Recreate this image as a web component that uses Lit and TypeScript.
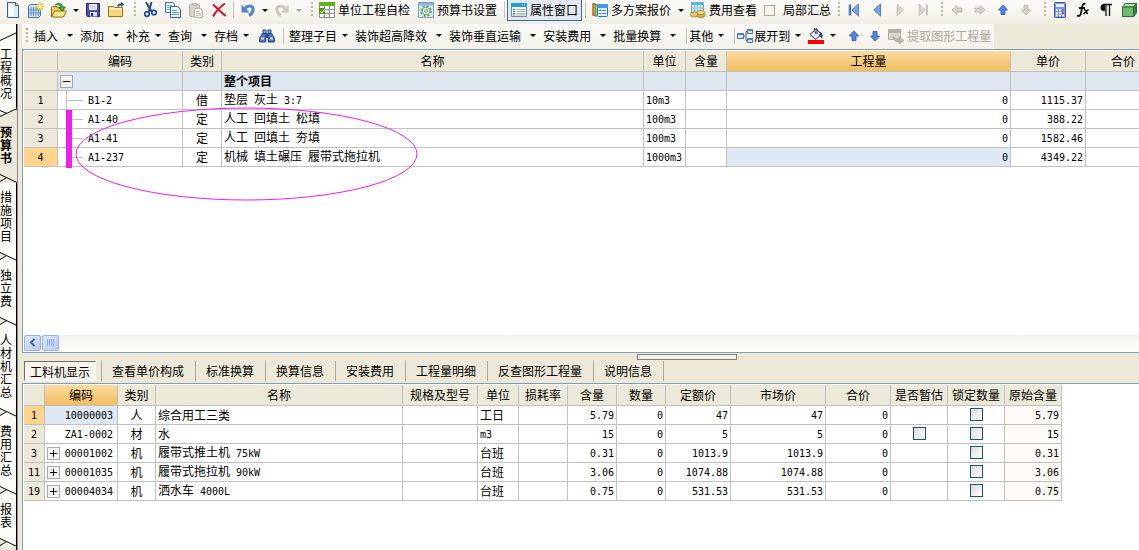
import { LitElement, html, css, svg, nothing, TemplateResult } from "lit";
import { customElement } from "lit/decorators.js";
import { classMap } from "lit/directives/class-map.js";

type Align = "left" | "center" | "right";
interface Column {
  title: string;
  width: number;
  align?: Align;
  current?: boolean;
}

const ICONS: Record<string, TemplateResult> = {
  doc: svg`<path d="M2.500 .5h8l3 3v12h-11z" fill="#dcebfa" stroke="#35618f"/><path d="M10.500 .5v3h3" fill="#fff" stroke="#35618f"/><path d="M4 2h5v12H4z" fill="#fff"/>`,
  sheet: svg`<path d="M.5 4.500l2-2h10v11l-2 2h-10z" fill="#d5e6fa" stroke="#3f74bd"/><path d="M3 5v9M5.500 5v9M8 5v9M10.500 5v9M1 8h11M1 11h11" stroke="#5b93d8"/><path d="M12 0v9M7.500 4.500h9M9 1.500l6 6M15 1.500l-6 6" stroke="#f2c32c" stroke-width="1.400"/><circle cx="12" cy="4.500" r="2" fill="#fff6b8"/>`,
  open: svg`<path d="M.5 14.500v-9l1-1h4l1 1.500h6v8.500z" fill="#f2cf60" stroke="#8f6b13"/><path d="M.5 15l3-6h12l-3 6z" fill="#fce58e" stroke="#8f6b13"/><path d="M4 3c3-3 7-2 8 2h2.500L11 9 7.500 5H10C9 3 7 2 4 3z" fill="#35b535" stroke="#137013" stroke-width=".7"/>`,
  save: svg`<path d="M1.500 1.500h13v13h-12l-1-1z" fill="#4a4cb4" stroke="#22247c"/><path d="M4 2h8v6H4z" fill="#f4f5ff"/><path d="M5 4h6M5 6h6" stroke="#b2b5dc"/><path d="M5 10h7v4.500H5z" fill="#d8daf0"/><path d="M6 11h2v3H6z" fill="#25276e"/>`,
  folder: svg`<path d="M.5 14.500v-10h5l1.500 1h7.500v9z" fill="#f6d77d" stroke="#9a7420"/><path d="M1.500 7h12" stroke="#fff1bd" stroke-width="2"/><path d="M9 4c1-2 2-2.500 4-2.500V0l3 2.500L13 5V3.500c-1.500 0-2 .3-2.500 1.500z" fill="#2c467e"/>`,
  cut: svg`<path d="M4 0l5 9M9.500 0L7 9" stroke="#27496f" stroke-width="2"/><circle cx="5" cy="12" r="2.300" fill="none" stroke="#1c3fb0" stroke-width="1.600"/><circle cx="12" cy="10.500" r="2.300" fill="none" stroke="#1c3fb0" stroke-width="1.600"/><path d="M6 10l3-2 2 1" stroke="#1c3fb0" stroke-width="1.500" fill="none"/>`,
  copy: svg`<path d="M.5 .5h7l2 2v8h-9z" fill="#eaf4ff" stroke="#3974b4"/><path d="M2 3.500h5M2 5.500h5M2 7.500h3" stroke="#78a9de"/><path d="M5.500 4.500h7l3 3v8h-10z" fill="#f4f9ff" stroke="#2c64a6"/><path d="M7 8.500h5M7 10.500h7M7 12.500h7" stroke="#5e97d6"/>`,
  paste: svg`<rect x="1.500" y="2.500" width="10" height="12" rx="1" fill="#d6d3c8" stroke="#b3b0a5"/><path d="M4 1h5v3H4z" fill="#c3c0b5"/><path d="M6.500 6.500h6l2 2v7h-8z" fill="#f4f3ee" stroke="#b9b6ab"/><path d="M8 9.500h4M8 11.500h5M8 13.500h5" stroke="#cbc8bd"/>`,
  del: svg`<path d="M2 2.500C6 6 10 10 14.500 14M14 1.500C9 5 5 9 2 14.500" stroke="#d3122e" stroke-width="2" fill="none"/>`,
  undo: svg`<path d="M5 6.500c3-4 9-3 8 2-.5 3-2 4-4 5" fill="none" stroke="#4c84d3" stroke-width="3"/><path d="M1.500 2.500v8h8z" fill="#4c84d3"/>`,
  redo: svg`<path d="M11 6.500C8 2.500 2 3.500 3 8.500c.5 3 2 4 4 5" fill="none" stroke="#cbc8be" stroke-width="3"/><path d="M14.500 2.500v8h-8z" fill="#cbc8be"/>`,
  check: svg`<path d="M.5 .5h15v15H.5z" fill="#fff" stroke="#8c8f8c"/><path d="M0 0h16v4H0z" fill="#62b41f"/><path d="M1 7.500h14M1 11.500h14M5.500 4v11M10.500 4v11" stroke="#8c8f8c"/><path d="M0 6h6v6H0z" fill="#4f9c1c"/><path d="M1 9l2 2 3-4" stroke="#fff" fill="none"/>`,
  gear: svg`<path d="M.5 .5h15v15H.5z" fill="#d9ebfa" stroke="#7d9fc9"/><path d="M1 1h14v2.500H1z" fill="#8eb4e4"/><circle cx="8" cy="9" r="5" fill="#eef9ec" stroke="#58a35c" stroke-width="1.600" stroke-dasharray="2.200 1.700"/><circle cx="8" cy="9" r="3.800" fill="#eef9ec" stroke="#58a35c"/><circle cx="8" cy="9" r="1.400" fill="#fff" stroke="#58a35c"/>`,
  props: svg`<path d="M.5 1.500h15v13H.5z" fill="#f4faf6" stroke="#6d8f9c"/><path d="M0 1h16v4H0z" fill="#1e9ec0"/><path d="M11 3h1M13 3h1" stroke="#fff"/><path d="M2 7.500h2M2 9.500h2M2 11.500h2M2 13h2" stroke="#2f8a60"/><path d="M5.500 7.500h9M5.500 9.500h9M5.500 11.500h9M5.500 13h9" stroke="#a6b9b0"/>`,
  quotes: svg`<path d="M3 2H1v11h2" fill="#ffd52e" stroke="#d33d22" stroke-width="1.300"/><path d="M5 2.500H3V14h2" fill="#83d850" stroke="#3e9c2b"/><rect x="5.500" y="2.500" width="10" height="12" rx="1" fill="#e7f2ff" stroke="#246ed0"/><path d="M5 2h11v4H5z" fill="#4894ea"/><path d="M7 8.500h2M10 8.500h4M7 11.500h2M10 11.500h4" stroke="#397bd2"/>`,
  cost: svg`<path d="M1.500 .5h12v11h-12z" fill="#e7f6fd" stroke="#5ba7cf"/><path d="M1 0h13v3H1z" fill="#59b6dc"/><path d="M4.500 3v8M7.500 3v8M10.500 3v8M2 6h11M2 9h11" stroke="#80bddb"/><ellipse cx="4.500" cy="12.500" rx="4" ry="2.500" fill="#eac463" stroke="#9c7624" stroke-width=".7"/><ellipse cx="11" cy="13.500" rx="4" ry="2" fill="#dcae48" stroke="#9c7624" stroke-width=".7"/><ellipse cx="11" cy="10.500" rx="4" ry="2" fill="#f3d67e" stroke="#9c7624" stroke-width=".7"/>`,
  first: svg`<path d="M4 2.500v11" stroke="#4b77d0" stroke-width="2.500"/><path d="M12.500 2v12L6 8z" fill="#7ba2ec" stroke="#3d68c4" stroke-width=".8"/>`,
  prev: svg`<path d="M11.500 2v12L5 8z" fill="#7ba2ec" stroke="#3d68c4" stroke-width=".8"/>`,
  next: svg`<path d="M5 2v12l6.500-6z" fill="#d6d4ca" stroke="#c3c1b6" stroke-width=".8"/>`,
  last: svg`<path d="M12 2.500v11" stroke="#c9c7bc" stroke-width="2"/><path d="M4 2v12l6.500-6z" fill="#d6d4ca" stroke="#c3c1b6" stroke-width=".8"/>`,
  left: svg`<path d="M3 8l5-4.500V6h5v4H8v2.500z" fill="#d3d1c8" stroke="#b7b5ab" stroke-width=".8"/>`,
  right: svg`<path d="M13 8L8 3.500V6H3v4h5v2.500z" fill="#d3d1c8" stroke="#b7b5ab" stroke-width=".8"/>`,
  up: svg`<path d="M8 3l4.500 5H10v4.500H6V8H3.500z" fill="#4f87ee" stroke="#2450ae" stroke-width=".8"/>`,
  down: svg`<path d="M8 13l4.500-5H10V3.500H6V8H3.500z" fill="#4f87ee" stroke="#2450ae" stroke-width=".8"/>`,
  downOff: svg`<path d="M8 13l4.500-5H10V3.500H6V8H3.500z" fill="#d3d1c8" stroke="#b7b5ab" stroke-width=".8"/>`,
  calc: svg`<rect x="2.500" y=".5" width="11" height="15" rx="1" fill="#7e9be0" stroke="#3d55a0"/><path d="M4 2h8v3H4z" fill="#e8effc"/><path d="M4 8h2M7 8h2M4 11h2M7 11h2M4 13.500h2M7 13.500h2M10 13.500h2" stroke="#fff" stroke-width="1.500"/><path d="M10 8h2M10 11h2" stroke="#d6455a" stroke-width="1.500"/>`,
  fx: svg`<path d="M10.500 2C8 1 7.500 3 7 6L6 11c-.5 3-2 3.500-4 2.500M4 6h6" fill="none" stroke="#111" stroke-width="1.800"/><path d="M9 8c2-1 2 4 4 3.500M13.500 7.500L8.500 12" fill="none" stroke="#111" stroke-width="1.500"/>`,
  para: svg`<path d="M7 2H6a3.500 3.500 0 0 0 0 7h1z" fill="#111"/><path d="M5 2.500h9M8 2v12M11.500 2v12" stroke="#111" stroke-width="1.300"/>`,
  cube: svg`<path d="M1.500 5l3-3.500h11l-3 3.500z" fill="#b4e3b4" stroke="#2c6b34"/><path d="M12.500 5l3-3.500v9.500l-3 3.500z" fill="#35803c" stroke="#2c6b34"/><path d="M1.500 5h11v9.500h-11z" fill="#6fbb72" stroke="#2c6b34"/>`,
  find: svg`<path d="M4 2h3v4H4zM9 2h3v4H9z" fill="#87a9dc" stroke="#24468c"/><path d="M3.500 5.500L.7 10v4h6v-4l.8-4.500zM12.500 5.500l2.800 4.500v4h-6v-4l-.8-4.500z" fill="#4f78bd" stroke="#1f3e80"/><path d="M7 7h2v3H7z" fill="#24468c"/><path d="M2 10.500h3M11 10.500h3" stroke="#cfe0f8" stroke-width="2"/>`,
  expand: svg`<path d="M6 8h3M9 3.500v9M9 3.500h2M9 12.500h2" stroke="#4a5f86" fill="none"/><path d="M.5 5.500h6v5h-6zM10.500 1.500h5v4h-5zM10.500 10.500h5v4h-5z" fill="#dbe9fb" stroke="#3e6fb9"/><path d="M0 5h7v2H0zM10 1h6v2h-6zM10 10h6v2h-6z" fill="#4b82cf"/>`,
  fill: svg`<path d="M8 1l5.500 5L8 11.500 2 6.500z" fill="#e3e7ee" stroke="#2b3145"/><path d="M8 6L6 1c1-2 3-1 3 1v4" fill="none" stroke="#2b3145"/><path d="M12 4c3 1 3 4 2 7-1-2-2-3-3-3z" fill="#1f3f9c"/><path d="M0 12h16v4H0z" fill="#f00"/>`,
  extract: svg`<path d="M.5 1.500h12v10H.5z" fill="#d8d5cb" stroke="#b4b1a6"/><path d="M0 1h13v4H0z" fill="#b4b1a6"/><path d="M5 8c2 3 4 3 6 3V8.500l5 4-5 3.500v-2c-4 0-6-2-6-6z" fill="#b9b6ab" stroke="#a29f94" stroke-width=".6"/>`,
};

const icon = (name: string) =>
  html`<svg class="icon" viewBox="0 0 16 16" width="16" height="16" aria-hidden="true">${ICONS[name]}</svg>`;

/* Han characters are set at 12px, half-width characters in a 6px wide face. */
const mixed = (text: string) =>
  text
    .split(/([\x20-\x7e]+)/)
    .filter((run) => run)
    .map((run) => (/^[\x20-\x7e]/.test(run) ? html`<span class="half">${run}</span>` : run));

const MAIN_COLUMNS: Column[] = [
  { title: "", width: 34 },
  { title: "编码", width: 125, align: "left" },
  { title: "类别", width: 39 },
  { title: "名称", width: 422, align: "left" },
  { title: "单位", width: 42, align: "left" },
  { title: "含量", width: 41, align: "right" },
  { title: "工程量", width: 284, align: "right", current: true },
  { title: "单价", width: 75, align: "right" },
  { title: "合价", width: 75, align: "right" },
];
const MAIN_ROWS = [
  ["1", "B1-2", "借", "垫层 灰土 3:7", "10m3", "", "0", "1115.37", ""],
  ["2", "A1-40", "定", "人工 回填土 松填", "100m3", "", "0", "388.22", ""],
  ["3", "A1-41", "定", "人工 回填土 夯填", "100m3", "", "0", "1582.46", ""],
  ["4", "A1-237", "定", "机械 填土碾压 履带式拖拉机", "1000m3", "", "0", "4349.22", ""],
];

const DETAIL_COLUMNS: Column[] = [
  { title: "", width: 21 },
  { title: "编码", width: 73, align: "right", current: true },
  { title: "类别", width: 38 },
  { title: "名称", width: 247, align: "left" },
  { title: "规格及型号", width: 75, align: "left" },
  { title: "单位", width: 41, align: "left" },
  { title: "损耗率", width: 49, align: "right" },
  { title: "含量", width: 49, align: "right" },
  { title: "数量", width: 49, align: "right" },
  { title: "定额价", width: 65, align: "right" },
  { title: "市场价", width: 95, align: "right" },
  { title: "合价", width: 65, align: "right" },
  { title: "是否暂估", width: 57 },
  { title: "锁定数量", width: 57 },
  { title: "原始含量", width: 57, align: "right" },
];
/* "[]" stands for a tick box. */
const DETAIL_ROWS = [
  ["1", "10000003", "人", "综合用工三类", "", "工日", "", "5.79", "0", "47", "47", "0", "", "[]", "5.79"],
  ["2", "ZA1-0002", "材", "水", "", "m3", "", "15", "0", "5", "5", "0", "[]", "[]", "15"],
  ["3", "00001002", "机", "履带式推土机 75kW", "", "台班", "", "0.31", "0", "1013.9", "1013.9", "0", "", "[]", "0.31"],
  ["11", "00001035", "机", "履带式拖拉机 90kW", "", "台班", "", "3.06", "0", "1074.88", "1074.88", "0", "", "[]", "3.06"],
  ["19", "00004034", "机", "洒水车 4000L", "", "台班", "", "0.75", "0", "531.53", "531.53", "0", "", "[]", "0.75"],
];

const shared = css`
  * {
    box-sizing: border-box;
  }
  :host {
    font: 12px/14px "Noto Sans CJK SC", sans-serif;
    color: #000;
  }
  button {
    font: inherit;
    color: inherit;
    background: none;
    border: 0;
    padding: 0;
    margin: 0;
    white-space: nowrap;
  }
  .icon {
    display: block;
    flex: none;
  }
  .half {
    font: 10px/14px "DejaVu Sans Mono", monospace;
    white-space: pre;
  }
`;

@customElement("tool-bars")
class ToolBars extends LitElement {
  static styles = [
    shared,
    css`
      :host {
        display: block;
      }
      .bar {
        display: flex;
        align-items: center;
        overflow: hidden;
      }
      .standard {
        height: 24px;
        padding: 0 0 4px 1px;
        background: linear-gradient(#fcfbf8, #f1efe4);
      }
      .btn {
        display: flex;
        flex: none;
        align-items: center;
        gap: 3px;
        height: 22px;
        padding: 0 4px;
      }
      .only {
        width: 23px;
        padding: 0;
        justify-content: center;
      }
      .on {
        border: 1px solid #316ac5;
        background: #e3e8f0;
        padding: 0 3px;
      }
      .off {
        color: #aca899;
      }
      .arrow {
        display: flex;
        flex: none;
        justify-content: center;
        width: 11px;
      }
      .arrow::after {
        content: "";
        border: 3px solid transparent;
        border-top-color: currentColor;
        border-bottom: 0;
      }
      .grip,
      .sep {
        flex: none;
        height: 16px;
      }
      .grip {
        width: 11px;
        background: repeating-linear-gradient(#b9b5a4 0 2px, transparent 2px 4px) 7px 0 / 2px 100% no-repeat;
      }
      .sep {
        width: 6px;
        background: linear-gradient(#c5c2b8, #c5c2b8) 3px 0 / 1px 100% no-repeat;
      }
      .opt {
        display: flex;
        flex: none;
        align-items: center;
        gap: 8px;
        padding-left: 3px;
      }
      .opt input {
        appearance: none;
        width: 11px;
        height: 11px;
        margin: 0;
        border: 1px solid #aca899;
        background: #f7f5ee;
      }
      .edit {
        width: fit-content;
        max-width: 100%;
        height: 25px;
        margin-left: 22px;
        padding-bottom: 2px;
        background: linear-gradient(#fcfbf8, #f3f1e8);
      }
      .edit .grip {
        width: 12px;
        background-position: 4px 0;
      }
      .edit .btn {
        padding: 0;
        gap: 1px;
      }
      .edit .arrow {
        width: 21px;
      }
      .edit .tight .arrow {
        width: 17px;
        padding-right: 3px;
      }
      .edit .only {
        width: 21px;
      }
      .edit .gap {
        width: 12px;
        background-position: 6px 0;
      }
      .edit .off {
        gap: 3px;
        padding: 0 3px;
      }
    `,
  ];

  private only(name: string, label: string, enabled = true) {
    return html`<button class="btn only" aria-label=${label} title=${label} ?disabled=${!enabled}>${icon(name)}</button>`;
  }

  private arrow(label: string, enabled = true) {
    return html`<button class="arrow ${enabled ? "" : "off"}" aria-label=${label}></button>`;
  }

  private menu(text: string, tight = false, glyph?: string) {
    return html`<button class=${classMap({ btn: true, tight })} aria-haspopup="menu" aria-label=${text || "填充颜色"}>
      ${glyph ? icon(glyph) : nothing}<span>${text}</span><span class="arrow"></span>
    </button>`;
  }

  render() {
    const grip = html`<span class="grip"></span>`;
    const sep = html`<span class="sep"></span>`;
    return html`
      <div class="bar standard" role="toolbar">
        ${this.only("doc", "新建")}${this.only("sheet", "新建预算")}${this.only("open", "打开")}${this.arrow("最近文件")}
        ${this.only("save", "保存")}${this.only("folder", "另存")}${grip}
        ${this.only("cut", "剪切")}${this.only("copy", "复制")}${this.only("paste", "粘贴", false)}${this.only("del", "删除")}${sep}
        ${this.only("undo", "撤销")}${this.arrow("撤销列表")}${this.only("redo", "恢复", false)}${this.arrow("恢复列表", false)}${grip}
        <button class="btn">${icon("check")}单位工程自检</button>
        <button class="btn">${icon("gear")}预算书设置</button>${sep}
        <button class="btn on" aria-pressed="true">${icon("props")}属性窗口</button>${sep}
        <button class="btn">${icon("quotes")}多方案报价</button>${this.arrow("报价列表")}
        <button class="btn">${icon("cost")}费用查看</button>
        <label class="opt"><input type="checkbox" />局部汇总</label>${grip}
        ${this.only("first", "首行")}${this.only("prev", "上一行")}${this.only("next", "下一行", false)}${this.only("last", "末行", false)}${grip}
        ${this.only("left", "升级", false)}${this.only("right", "降级", false)}${this.only("up", "上移")}${this.only("downOff", "下移", false)}${grip}
        ${this.only("calc", "计算器")}${this.only("fx", "函数")}${this.only("para", "段落")}${this.only("cube", "图形")}
      </div>
      <div class="bar edit" role="toolbar">
        ${grip}
        ${this.menu("插入")}${this.menu("添加")}${this.menu("补充", true)}${this.menu("查询")}${this.menu("存档", true)}
        ${this.only("find", "查找")}<span class="sep gap"></span>
        ${this.menu("整理子目", true)}${this.menu("装饰超高降效")}${this.menu("装饰垂直运输")}${this.menu("安装费用")}${this.menu("批量换算")}${sep}
        ${this.menu("其他", true)}${sep}${this.menu("展开到", true, "expand")}${this.menu("", true, "fill")}
        ${this.only("up", "上移")}${this.only("down", "下移")}
        <button class="btn off" disabled>${icon("extract")}提取图形工程量</button>
      </div>
    `;
  }
}

@customElement("side-tabs")
class SideTabs extends LitElement {
  static styles = [
    shared,
    css`
      :host {
        display: flex;
        flex-direction: column;
        width: 18px;
        background: #fbfaf6;
        border-right: 1px solid #8c8a80;
      }
      .tab {
        position: relative;
        width: 100%;
        padding: 7px 0 19px;
        line-height: 13px;
        text-align: left;
        border-right: 1px solid #000;
      }
      .first {
        padding: 23px 0 11px;
      }
      .current {
        padding: 15px 0 19px;
        font-weight: bold;
        background: #ece9d8;
        border-right-color: #ece9d8;
      }
      .text {
        display: block;
        width: 13px;
        white-space: normal;
        word-break: break-all;
      }
      .notch {
        position: absolute;
        left: 0;
        bottom: 0;
      }
      .top {
        bottom: auto;
        top: 8px;
      }
      .first .low {
        bottom: -7px;
        z-index: 1;
      }
      .rest {
        flex: 1;
        background: #ece9d8;
        border-right: 1px solid #000;
      }
    `,
  ];

  render() {
    const names = ["工程概况", "预算书", "措施项目", "独立费", "人材机汇总", "费用汇总", "报表"];
    const falling = html`<svg class="notch" width="17" height="9" aria-hidden="true">
      <path d="M0 1l6 3-6 3z" fill="#ece9d8" /><path d="M0 .5l17 8M0 7.500l6-3.500" fill="none" stroke="#000" />
    </svg>`;
    const rising = html`<svg class="notch low" width="17" height="9" aria-hidden="true">
      <path d="M0 0h17v1L0 8z" fill="#fbfaf6" /><path d="M0 2.500l6 2.500M0 8.500l17-8" fill="none" stroke="#000" />
    </svg>`;
    return html`${names.map(
        (name, i) => html`<button class=${classMap({ tab: true, first: i === 0, current: i === 1 })}>
          ${i === 0
            ? html`<svg class="notch top" width="17" height="9" aria-hidden="true">
                <path d="M0 8.500l17-8" fill="none" stroke="#000" />
              </svg>`
            : nothing}<span class="text">${name}</span>${i === 0 ? rising : falling}
        </button>`
      )}<span class="rest"></span>`;
  }
}

@customElement("app-root")
class AppRoot extends LitElement {
  static styles = [
    shared,
    css`
      :host {
        display: flex;
        flex-direction: column;
        height: 100vh;
        overflow: hidden;
        background: #ece9d8;
      }
      .work {
        display: flex;
        flex: 1;
        min-height: 0;
        margin-top: -25px;
      }
      .panes {
        display: flex;
        flex: 1;
        flex-direction: column;
        min-width: 0;
        margin-left: 4px;
        padding-top: 25px;
      }
      .pane {
        position: relative;
        display: flex;
        flex-direction: column;
        overflow: hidden;
        background: #fff;
        border: 1px solid #7f9db9;
        border-right: 0;
        padding: 1px 0 0 1px;
      }
      .upper {
        flex: 304 1 0;
      }
      .lower {
        flex: 167 1 0;
        border-bottom: 0;
      }
      table {
        flex: none;
        align-self: flex-start;
        table-layout: fixed;
        width: 0;
        border-spacing: 0;
      }
      th,
      td {
        height: 19px;
        padding: 0 2px;
        line-height: 14px;
        font-weight: normal;
        text-align: center;
        white-space: nowrap;
        overflow: hidden;
        border: 0 solid #c0c0c0;
        border-width: 0 1px 1px 0;
      }
      thead th {
        height: 21px;
        padding: 0;
      }
      th {
        background: #ece9d8;
      }
      thead .current {
        background: linear-gradient(#fbdaa0, #f1bd60);
      }
      tbody .current {
        background: #ffd58d;
      }
      td.left {
        text-align: left;
      }
      td.right {
        text-align: right;
      }
      .active {
        background: #dfe9f5;
      }
      .project td {
        background: #dee6f0;
      }
      .project td.name {
        font-weight: bold;
        text-align: left;
      }
      .original {
        background: #fffaf5;
      }
      .upper td.tree {
        padding: 0 0 0 8px;
        text-align: left;
      }
      .node {
        display: flex;
        align-items: center;
        gap: 5px;
        height: 18px;
      }
      .node .half {
        padding-top: 2px;
      }
      .node::before {
        content: "";
        width: 17px;
        height: 18px;
        background:
          linear-gradient(#c0c0c0, #c0c0c0) 0 0 / 1px 100% no-repeat,
          linear-gradient(#c0c0c0, #c0c0c0) 0 9px / 100% 1px no-repeat;
      }
      .upper .project td.tree {
        padding-left: 2px;
      }
      .knob {
        display: block;
        flex: none;
        width: 13px;
        height: 13px;
        border: 1px solid #aaa;
        background: #f5f4f0;
      }
      .knob svg {
        display: block;
      }
      .lower td.code {
        padding: 0 4px 0 2px;
      }
      .code div {
        display: flex;
        justify-content: flex-end;
        align-items: center;
        gap: 5px;
        padding-top: 2px;
      }
      td input {
        appearance: none;
        display: block;
        width: 13px;
        height: 13px;
        margin: 0 auto;
        border: 1px solid #1c5180;
        background: linear-gradient(135deg, #dcdcd7, #fff);
      }
      .mark {
        position: absolute;
        left: 43px;
        top: 57px;
      }
      .scroll {
        display: flex;
        gap: 1px;
        height: 17px;
        margin-top: auto;
        background: linear-gradient(#f3f1ec, #fefefb);
      }
      .scroll button {
        display: grid;
        place-items: center;
        width: 17px;
        height: 16px;
        border: 1px solid #9ab2e6;
        border-radius: 2px;
        background: linear-gradient(135deg, #dbe6fe, #b8cbf8);
      }
      .splitter {
        display: flex;
        justify-content: center;
        height: 8px;
        padding: 1px 0 0 213px;
      }
      .splitter span {
        width: 100px;
        height: 6px;
        border: 1px solid #85837a;
        background: #f3f1e8;
      }
      .tabs {
        display: flex;
        height: 22px;
        padding-left: 2px;
      }
      .tabs button {
        height: 20px;
        padding: 0 11px 0 10px;
        border-right: 1px solid #aca899;
      }
      .tabs .pressed {
        padding: 2px 5px 0;
        border: 1px solid #fff;
        border-top-color: #716f64;
        border-left-color: #716f64;
        background: #f6f4ec;
      }
      .rule {
        width: 6px;
        height: 20px;
        border-right: 1px solid #aca899;
      }
    `,
  ];

  private knob(open: boolean) {
    return html`<button class="knob" aria-label=${open ? "折叠" : "展开"}>
      <svg width="11" height="11"><path d=${open ? "M2 5.500h7" : "M2 5.500h7M5.500 2v7"} stroke="#000" /></svg>
    </button>`;
  }

  private head(columns: Column[]) {
    return html`<colgroup>
        ${columns.map((c) => html`<col style="width:${c.width}px" />`)}
      </colgroup>
      <thead>
        <tr>
          ${columns.map((c) => html`<th class=${c.current ? "current" : ""}>${c.title}</th>`)}
        </tr>
      </thead>`;
  }

  private mainCell(row: string[], c: number) {
    const text = row[c];
    if (c === 0) return html`<th class=${text === "4" ? "current" : ""}>${mixed(text)}</th>`;
    if (c === 1) return html`<td class="tree"><div class="node">${mixed(text)}</div></td>`;
    const active = c === 6 && row[0] === "4";
    return html`<td class=${classMap({ [MAIN_COLUMNS[c].align ?? "center"]: true, active })}>${mixed(text)}</td>`;
  }

  private detailCell(row: string[], c: number) {
    const text = row[c];
    if (c === 0) return html`<th class=${text === "1" ? "current" : ""}>${mixed(text)}</th>`;
    if (c === 1)
      return html`<td class=${classMap({ code: true, active: row[0] === "1" })}>
        <div>${Number(row[0]) > 2 ? this.knob(false) : nothing}${mixed(text)}</div>
      </td>`;
    if (text === "[]")
      return html`<td><input type="checkbox" aria-label="${DETAIL_COLUMNS[c].title} ${row[1]}" /></td>`;
    return html`<td class=${classMap({ [DETAIL_COLUMNS[c].align ?? "center"]: true, original: c === 14 })}>
      ${mixed(text)}
    </td>`;
  }

  render() {
    const tabs = ["查看单价构成", "标准换算", "换算信息", "安装费用", "工程量明细", "反查图形工程量", "说明信息"];
    return html`
      <tool-bars></tool-bars>
      <div class="work">
        <side-tabs></side-tabs>
        <main class="panes">
          <section class="pane upper">
            <table>
              ${this.head(MAIN_COLUMNS)}
              <tbody>
                <tr class="project">
                  <th></th>
                  <td class="tree">${this.knob(true)}</td>
                  <td></td>
                  <td class="name">整个项目</td>
                  <td></td>
                  <td></td>
                  <td></td>
                  <td></td>
                  <td></td>
                </tr>
                ${MAIN_ROWS.map((row) => html`<tr>${row.map((_, c) => this.mainCell(row, c))}</tr>`)}
              </tbody>
            </table>
            <svg class="mark" width="354" height="96" aria-hidden="true">
              <path d="M0 3h6v58H0z" fill="#f01cf0" />
              <ellipse cx="180.500" cy="47" rx="170.500" ry="46" fill="none" stroke="#f01cf0" />
            </svg>
            <div class="scroll">
              <button aria-label="向左滚动">
                <svg width="9" height="9"><path d="M6.500 1L3 4.500 6.500 8" fill="none" stroke="#4d6185" stroke-width="2" /></svg>
              </button>
              <button aria-label="滚动滑块">
                <svg width="9" height="7"><path d="M1.500 0v7M3.500 0v7M5.500 0v7M7.500 0v7" stroke="#8cadf0" /></svg>
              </button>
            </div>
          </section>
          <div class="splitter"><span></span></div>
          <nav class="tabs">
            <button class="pressed">工料机显示</button><span class="rule"></span>
            ${tabs.map((t) => html`<button>${t}</button>`)}
          </nav>
          <section class="pane lower">
            <table>
              ${this.head(DETAIL_COLUMNS)}
              <tbody>
                ${DETAIL_ROWS.map((row) => html`<tr>${row.map((_, c) => this.detailCell(row, c))}</tr>`)}
              </tbody>
            </table>
          </section>
        </main>
      </div>
    `;
  }
}
